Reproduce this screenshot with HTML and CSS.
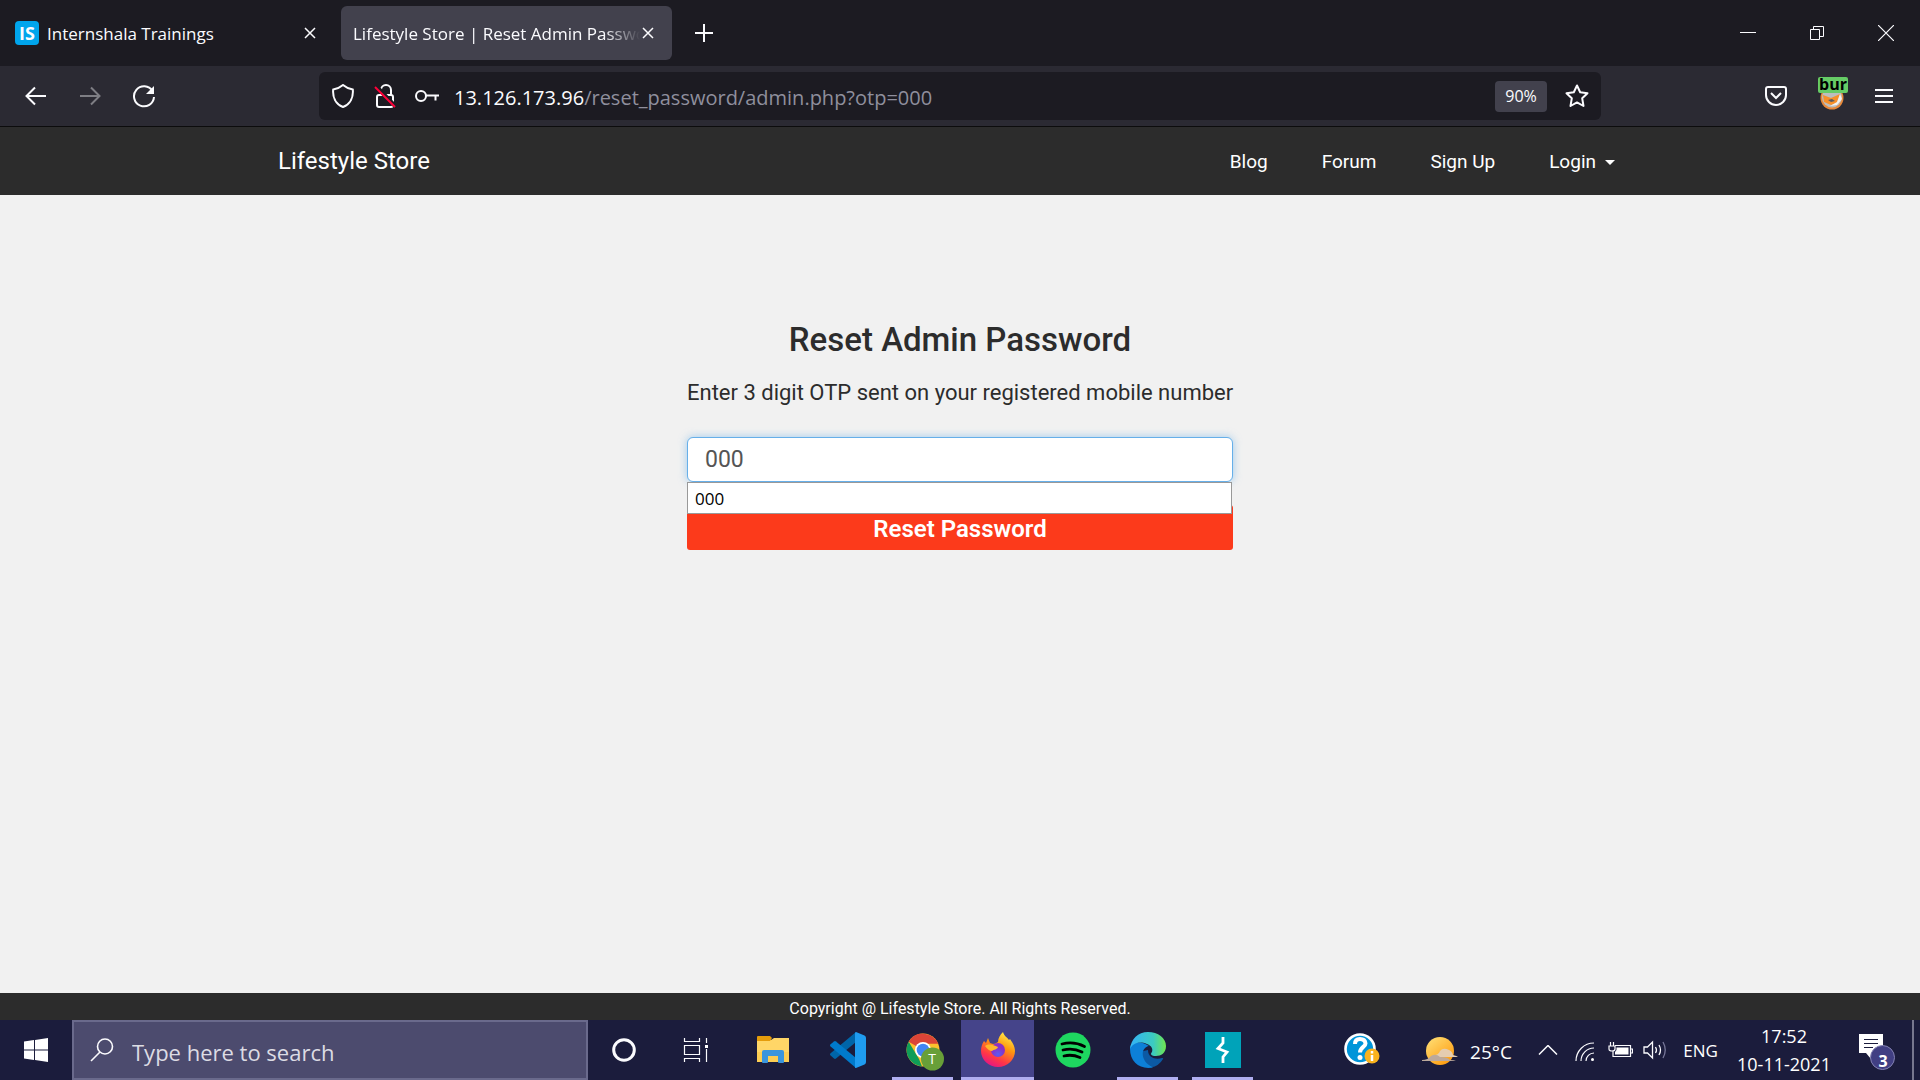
FILE: index.html
```html
<!DOCTYPE html>
<html lang="en">
<head>
<meta charset="utf-8">
<title>Lifestyle Store | Reset Admin Password</title>
<link rel="stylesheet" href="styles.css">
</head>
<body>
<header class="browser">
  <div class="tabstrip">
    <div class="tab">
      <span class="favicon">IS</span>
      <span class="tab-title">Internshala Trainings</span>
      <button class="tab-close" aria-label="Close tab"><svg width="12" height="12" viewBox="0 0 12 12"><path d="M1 1l10 10M11 1L1 11"/></svg></button>
    </div>
    <div class="tab active">
      <span class="tab-title fade">Lifestyle Store | Reset Admin Password</span>
      <button class="tab-close" aria-label="Close tab"><svg width="12" height="12" viewBox="0 0 12 12"><path d="M1 1l10 10M11 1L1 11"/></svg></button>
    </div>
    <button class="new-tab" aria-label="New tab"><svg width="20" height="20" viewBox="0 0 20 20"><path d="M10 1v18M1 10h18" stroke-width="2"/></svg></button>
    <div class="window-controls">
      <button aria-label="Minimize"><svg width="16" height="16" viewBox="0 0 16 16"><path d="M0 7.500h16" stroke-width="1"/></svg></button>
      <button aria-label="Restore"><svg width="16" height="16" viewBox="0 0 16 16"><path d="M1.500 4.500h9v10h-9zM4.500 4.500v-3h10v10h-4" stroke-width="1"/></svg></button>
      <button aria-label="Close"><svg width="16" height="16" viewBox="0 0 16 16"><path d="M0 0l16 16M16 0L0 16" stroke-width="1.200"/></svg></button>
    </div>
  </div>
  <div class="toolbar">
    <div class="nav-buttons">
      <button aria-label="Back"><svg width="22" height="20" viewBox="0 0 22 20"><path d="M21 10H1.500M10 1.500L1.500 10l8.500 8.500" stroke-width="2"/></svg></button>
      <button aria-label="Forward" class="dim"><svg width="22" height="20" viewBox="0 0 22 20"><path d="M1 10h19.500M12 1.500l8.500 8.500-8.500 8.500" stroke-width="2"/></svg></button>
      <button aria-label="Reload"><svg width="24" height="24" viewBox="0 0 24 24"><path d="M20.500 7A10 10 0 1 0 22 13" stroke-width="2"/><path d="M22 2v8h-8z" fill="#fbfbfe" stroke="none"/></svg></button>
    </div>
    <div class="urlbar">
      <button aria-label="Tracking protection" class="url-icon"><svg width="22" height="24" viewBox="0 0 22 24"><path d="M11 1C8 3.500 4.500 5 1.200 5.500 0.500 13 3.500 20 11 23c7.500-3 10.500-10 9.800-17.500C17.500 5 14 3.500 11 1z" stroke-width="2"/></svg></button>
      <button aria-label="Connection not secure" class="url-icon"><svg width="22" height="26" viewBox="0 0 22 26"><path d="M7 7a5 5 0 0 1 10 0v5M5 12h12q2 0 2 2v8q0 2-2 2H5q-2 0-2-2v-8q0-2 2-2z" stroke-width="2"/><path d="M2 3l20 21" stroke="#1c1b22" stroke-width="4"/><path d="M1 4l20 20" stroke="#ff0039" stroke-width="2"/></svg></button>
      <button aria-label="Saved logins" class="url-icon"><svg width="24" height="14" viewBox="0 0 24 14"><circle cx="6" cy="7" r="5" stroke-width="2"/><path d="M11 6.500h13M20.500 6.500v5" stroke-width="2"/></svg></button>
      <span class="url"><b>13.126.173.96</b>/reset_password/admin.php?otp=000</span>
      <button class="zoom">90%</button>
      <button aria-label="Bookmark" class="star"><svg width="24" height="24" viewBox="0 0 24 24"><path d="M12 1.500l3.200 6.700 7.300 1-5.300 5.100 1.300 7.700-6.500-3.600L5.500 22l1.300-7.700L1.500 9.200l7.300-1z" stroke-width="2" stroke-linejoin="round"/></svg></button>
    </div>
    <div class="extensions">
      <button aria-label="Pocket"><svg width="22" height="20" viewBox="0 0 22 20"><path d="M3 1h16q2 0 2 2v6a10 10 0 0 1-20 0V3q0-2 2-2z" stroke-width="2"/><path d="M6 7l5 5 5-5" stroke-width="2"/></svg></button>
      <button aria-label="Proxy switcher" class="foxy"><svg width="24" height="24" viewBox="0 0 24 24" stroke="none"><circle cx="12" cy="12" r="11.500" fill="#e8893a"/><circle cx="12" cy="11.500" r="10" fill="#bdbdbd"/><path d="M3 9l8 3 9-4-3 9-6 2-7-3z" fill="#f7902a"/><path d="M20 8l2 5-5 6-7 1 7-4z" fill="#f4f1ee"/><path d="M8 14l4-1 3 2-4 1z" fill="#5a5a62"/></svg><span class="foxy-badge">bur</span></button>
      <button aria-label="Menu"><svg width="18" height="16" viewBox="0 0 18 16"><path d="M0 2h18M0 8h18M0 14h18" stroke-width="2"/></svg></button>
    </div>
  </div>
</header>

<nav class="site-nav">
  <div class="container">
    <a class="brand" href="#">Lifestyle Store</a>
    <a href="#">Blog</a>
    <a href="#">Forum</a>
    <a href="#">Sign Up</a>
    <a href="#">Login<span class="caret"></span></a>
  </div>
</nav>

<main class="page">
  <form class="reset">
    <h1>Reset Admin Password</h1>
    <label for="otp">Enter 3 digit OTP sent on your registered mobile number</label>
    <div class="field">
      <input id="otp" type="text" value="000" autocomplete="off">
      <div class="suggestions">000</div>
    </div>
    <button type="button" class="submit">Reset Password</button>
  </form>
</main>

<footer class="site-footer">Copyright @ Lifestyle Store. All Rights Reserved.</footer>

<div class="taskbar">
  <button class="start" aria-label="Start"><svg width="24" height="24" viewBox="0 0 24 24"><path fill="#fff" stroke="none" d="M0 3.500l10-1.400V11.500H0zM11 2L24 0v11.500H11zM0 12.500h10v9.400L0 20.500zM11 12.500h13V24l-13-2z"/></svg></button>
  <div class="search">
    <svg width="24" height="24" viewBox="0 0 24 24"><circle cx="15" cy="8.500" r="7.500" stroke-width="1.600"/><path d="M10 14L1 23" stroke-width="1.600"/></svg>
    <input type="text" placeholder="Type here to search" aria-label="Type here to search">
  </div>
  <button class="task" aria-label="Cortana"><svg width="24" height="24" viewBox="0 0 24 24"><circle cx="12" cy="12" r="10.300" stroke-width="3"/></svg></button>
  <button class="task" aria-label="Task View"><svg width="26" height="24" viewBox="0 0 26 24"><path d="M1.500 0v3.500h15V0M1.500 24v-3.500h15V24M1.500 7.500h15v9h-15zM23.500 0v5M23.500 11v13" stroke-width="1.200"/><path d="M22 7h3v3h-3z" fill="#fff" stroke="none"/></svg></button>
  <div class="apps">
    <button class="app" aria-label="File Explorer"><svg width="32" height="28" viewBox="0 0 32 28" stroke="none"><path fill="#ffd667" d="M0 4h14l3-2h15v24H0z"/><path fill="#f9c440" d="M0 16h32v10H0z" opacity=".5"/><path fill="#e59c0b" d="M0 1q0-1 1-1h12l2 2-2 3H0z"/><path fill="#3a95dd" d="M5 26V16q0-2 2-2h18q2 0 2 2v10q0 1-1 1h-4q-1 0-1-1v-6H11v6q0 1-1 1H6q-1 0-1-1z"/></svg></button>
    <button class="app" aria-label="Visual Studio Code"><svg width="36" height="36" viewBox="0 0 36 36" stroke="none"><path fill="#0065a9" d="M26 0v10L6 26.500q-1 .8-2 0L.600 23.500q-1.200-1 0-2.200z"/><path fill="#007acc" d="M.600 14.500q-1.200-1.200 0-2.200L4 9.500q1-.8 2 0L26 26v10z"/><path fill="#1f9cf0" d="M26 0l8.500 3.500Q36 4.200 36 6v24q0 1.800-1.500 2.500L26 36q-1.500 0-1-1.500V1.500Q25 .2 26 0z"/></svg></button>
    <button class="app open" aria-label="Google Chrome"><svg width="38" height="38" viewBox="-2 -1 38 38" overflow="visible" stroke="none"><circle cx="17" cy="18" r="16.500" fill="#fbc02d"/><path fill="#db4437" d="M17 18L2.700 9.800a16.500 16.500 0 0 1 29.500 2H17z"/><path fill="#0f9d58" d="M2.700 9.800L13 27l3 7.400A16.500 16.500 0 0 1 2.700 9.800z"/><circle cx="17" cy="18" r="8" fill="#fff"/><circle cx="17" cy="18" r="6.300" fill="#4285f4"/><circle cx="26.500" cy="27" r="11.500" fill="#689f38"/></svg><span class="profile">T</span></button>
    <button class="app open current" aria-label="Firefox"><svg width="36" height="36" viewBox="0 0 36 36" stroke="none"><defs><linearGradient id="ff" x1=".8" y1="0" x2=".3" y2="1"><stop offset="0" stop-color="#fff44f"/><stop offset=".4" stop-color="#ff980e"/><stop offset=".75" stop-color="#ff3647"/><stop offset="1" stop-color="#e31587"/></linearGradient><radialGradient id="globe" cx=".5" cy=".8"><stop offset="0" stop-color="#5b5bf0"/><stop offset="1" stop-color="#8b2fc4"/></radialGradient></defs><path fill="url(#ff)" d="M4 9l2 2 2-5 2 5 3 1c2 0 3-1 5-2 0-4 2-7 5-10 1 4 4 5 6 8l1-1c2 3 5 7 5 12A17 16 0 0 1 1 19c0-4 1-7 3-10z"/><circle cx="18" cy="18" r="7" fill="url(#globe)"/><path fill="#ffb72a" d="M5 14c4-3 8-1 13 1-1 3-4 2-6 4-2 0-5-2-7-5z"/></svg></button>
    <button class="app" aria-label="Spotify"><svg width="36" height="36" viewBox="0 0 36 36"><circle cx="18" cy="18" r="17.500" fill="#1ed760" stroke="none"/><path d="M7 12q12-3 22.500 2.500M8 18q10-2.500 19 2M9 24q8-2 16 1.500" stroke="#000" stroke-width="2.800" stroke-linecap="round"/></svg></button>
    <button class="app open" aria-label="Microsoft Edge"><svg width="36" height="36" viewBox="0 0 36 36" stroke="none"><defs><linearGradient id="ed"><stop offset=".1" stop-color="#35b6f0"/><stop offset=".65" stop-color="#3ccbc0"/><stop offset="1" stop-color="#70e64e"/></linearGradient></defs><path fill="#0c59a4" d="M9 20c0 9 5 15 12 15.500q8-1.500 12-8.500 1-1-1-1c-6 2-14 0-14-8z"/><path fill="#0d80d8" d="M0 17C0 8 12 9 19 14c-8 1-10 15 4 21.500C10 38 0 30 0 17z"/><path fill="url(#ed)" d="M0 17C1 7 8 0 18 0c10 0 18 6 18 14 0 7-5 10-10 10-5 0-6-2-4-4 1-3 0-6-5-8C9 9 3 11 0 17z"/></svg></button>
    <button class="app open" aria-label="Burp Suite"><svg width="36" height="36" viewBox="0 0 36 36" stroke="none"><path fill="#00a3b9" d="M0 0h36v36H0z"/><path d="M18 5v6l-5 5.500 9 3.500-4 5v6" stroke="#fff" stroke-width="2.800"/></svg></button>
  </div>
  <div class="tray">
    <button class="help" aria-label="Help"><svg width="36" height="34" viewBox="0 0 36 34"><circle cx="16" cy="16" r="14.500" fill="#0095d9" stroke="#fff" stroke-width="2.600"/><path d="M11 11q0-5 5-5t5.500 4.500C21.500 14 16 14 16 19.500" stroke="#fff" stroke-width="4"/><circle cx="16" cy="24.500" r="2.500" fill="#fff" stroke="none"/><circle cx="28" cy="23" r="7.500" fill="#f9b21d" stroke="none"/><path d="M28 22v6M28 18v2.500" stroke="#fff" stroke-width="2.500"/></svg></button>
    <button class="weather"><svg width="36" height="30" viewBox="0 0 36 30" stroke="none"><defs><linearGradient id="sun" x2=".8" y2="1"><stop offset="0" stop-color="#ffe27a"/><stop offset="1" stop-color="#ff9a0c"/></linearGradient></defs><circle cx="18" cy="14" r="14" fill="url(#sun)"/><path fill="#e5cdb0" d="M10 19q7-1 8-5 3-4 9-1 3 1 4 5 4 1 5 2H17z"/><path fill="#bca99b" d="M0 23q6 0 9-4 5-3 9 1 8 0 10 3 4 0 6 1H0z"/></svg>25°C</button>
    <button class="chevron" aria-label="Show hidden icons"><svg width="20" height="10" viewBox="0 0 20 10"><path d="M1 9.500l9-9 9 9" stroke-width="1.500"/></svg></button>
    <button class="wifi" aria-label="Network"><svg width="20" height="20" viewBox="0 0 20 20"><path d="M1 19A18 18 0 0 1 19 1M6 19A13 13 0 0 1 19 6M11 19a8 8 0 0 1 8-8" stroke-width="1.200"/><circle cx="17.500" cy="17.500" r="1.500" fill="#fff" stroke="none"/></svg></button>
    <button class="battery" aria-label="Battery"><svg width="25" height="18" viewBox="0 0 25 18"><path d="M7 4.500h15.500v11H5v-5M23 8h1.500v4H23M1 5h6v3q0 2-3 2t-3-2zM2.500 1v4M5.500 1v4" stroke-width="1.200"/><path d="M8.500 6.500h12v7H7V11l1.500-2z" fill="#fff" stroke="none"/></svg></button>
    <button class="volume" aria-label="Volume"><svg width="24" height="20" viewBox="0 0 24 20"><path d="M1 7h3.500L9.500 2v16l-5-5H1zM12.500 7q2 3 0 6M16 5q3 5 0 10" stroke-width="1.300"/><path d="M20 2q4.500 8 0 16" stroke="#777799" stroke-width="1.300"/></svg></button>
    <button class="lang">ENG</button>
    <button class="clock"><span>17:52</span><span>10-11-2021</span></button>
    <button class="notify" aria-label="Notifications"><svg width="36" height="36" viewBox="0 0 36 36"><path fill="#fff" stroke="none" d="M0 0h24v19H12v6l-5-6H0z"/><path d="M5 5.500h14M5 9.500h14M5 13.500h9" stroke="#1b1c3c" stroke-width="1.200"/><circle cx="23.500" cy="23.500" r="12" fill="#413f83" stroke="#8583b4" stroke-width="1"/></svg><span class="count">3</span></button>
    <span class="show-desktop"></span>
  </div>
</div>
</body>
</html>
```
FILE: styles.css
```css
* { box-sizing: border-box; }

body {
  margin: 0;
  min-height: 100vh;
  display: flex;
  flex-direction: column;
  background: #f1f1f1;
  font-family: "Open Sans", "Noto Sans", sans-serif;
}

button {
  display: flex;
  align-items: center;
  justify-content: center;
  padding: 0;
  border: 0;
  background: none;
  color: inherit;
  font: inherit;
}

input { font: inherit; }

svg { display: block; flex: none; fill: none; stroke: #fbfbfe; stroke-width: 1.5; }
svg[stroke="none"] { stroke: none; }

/* Browser window */
.browser { color: #fbfbfe; }

.tabstrip {
  display: flex;
  align-items: center;
  height: 66px;
  background: #1c1b22;
  font-size: 17px;
}

.tab {
  display: flex;
  align-items: center;
  width: 331px;
  height: 54px;
  padding: 0 13px 0 15px;
  border-radius: 6px;
}

.tab + .tab { margin-left: 10px; }
.tab.active { padding: 0 16px 0 12px; background: #42414d; }

.favicon {
  width: 24px;
  height: 24px;
  margin-right: 8px;
  border-radius: 4px;
  background: #00a5ec;
  font: 700 18px/24px "Open Sans", sans-serif;
  text-align: center;
}

.tab-title { flex: 1; overflow: hidden; white-space: nowrap; }
.fade { mask-image: linear-gradient(to left, transparent, #000 36px); }
.tab-close { width: 16px; height: 24px; }
.new-tab { width: 64px; height: 54px; }

.window-controls { display: flex; margin-left: auto; }
.window-controls button { width: 69px; height: 66px; }

.toolbar {
  display: flex;
  align-items: center;
  height: 61px;
  background: #2b2a33;
  border-bottom: 1px solid #0c0c0d;
}

.nav-buttons { display: flex; width: 319px; padding-left: 9px; }
.nav-buttons button { width: 54px; height: 48px; }
.dim { opacity: .4; }

.urlbar {
  flex: 1;
  display: flex;
  align-items: center;
  height: 48px;
  padding: 0 10px 0 3px;
  border-radius: 6px;
  background: #1c1b22;
}

.url-icon { width: 42px; height: 48px; }
.url { flex: 1; padding: 2px 0 0 6px; color: #8f8f9d; font-size: 20px; }
.url b { color: #fbfbfe; font-weight: 400; }

.zoom {
  width: 52px;
  height: 31px;
  margin-right: 16px;
  border-radius: 4px;
  background: #42414d;
  font-size: 16px;
}

.star { width: 28px; height: 48px; }

.extensions { display: flex; align-items: center; justify-content: flex-end; width: 319px; padding-right: 9px; }
.extensions button { position: relative; width: 54px; height: 48px; }

.foxy-badge {
  position: absolute;
  left: 15px;
  top: 5px;
  width: 30px;
  height: 16px;
  border-radius: 2px;
  background: #66cc66;
  color: #000;
  font: 700 16px/15px "Open Sans", sans-serif;
  text-align: center;
}

.extensions .foxy { padding: 4px 0 0 3px; }

/* Store page */
.site-nav,
.page,
.site-footer { font-family: Roboto, sans-serif; }

.site-nav { background: #2c2c2c; }

.container {
  display: flex;
  align-items: center;
  max-width: 1364px;
  height: 68px;
  margin: 0 auto;
}

.container a {
  padding: 0 27px;
  color: #fff;
  font-size: 19px;
  text-decoration: none;
}

.container .brand { margin-right: auto; padding: 0; font-size: 24px; }

.caret {
  display: inline-block;
  margin-left: 9px;
  border: 5px solid transparent;
  border-top-color: #fff;
  border-bottom: 0;
  vertical-align: middle;
}

.page { flex: 1; padding: 121px 20px 0; color: #2c2c2c; }

.reset {
  display: flex;
  flex-direction: column;
  max-width: 546px;
  margin: 0 auto;
}

h1 { margin: 0; font-size: 33px; line-height: 48px; font-weight: 500; text-align: center; }
.reset label { margin: 17px 0 32px; font-size: 22px; line-height: 24px; text-align: center; white-space: nowrap; }

.field { position: relative; margin-bottom: 23px; }

.field input {
  display: block;
  width: 100%;
  height: 45px;
  padding: 0 17px;
  border: 1px solid #66afe9;
  border-radius: 6px;
  outline: 0;
  background: #fff;
  box-shadow: 0 0 9px rgba(102, 175, 233, .6);
  color: #555;
  font-size: 23px;
}

.suggestions {
  position: absolute;
  z-index: 1;
  top: 100%;
  left: 0;
  right: 1px;
  height: 32px;
  padding-left: 7px;
  border: 1px solid #999;
  background: #fff;
  color: #000;
  font: 17px/32px "Open Sans", sans-serif;
}

.submit {
  height: 45px;
  padding-top: 3px;
  border-radius: 3px;
  background: #fc3a1b;
  color: #fff;
  font-size: 24px;
  font-weight: 600;
}

.site-footer {
  height: 27px;
  background: #2c2c2c;
  color: #fff;
  font-size: 16px;
  line-height: 32px;
  text-align: center;
}

/* Desktop taskbar */
.taskbar {
  display: flex;
  height: 60px;
  background: #1b1c3c;
  color: #fff;
}

.taskbar button { position: relative; }
.start, .task { width: 72px; }

.search {
  display: flex;
  align-items: center;
  width: 516px;
  padding-left: 16px;
  border: 2px solid #6a6a8c;
  background: #4c4b6e;
}

.search input {
  flex: 1;
  padding: 4px 0 0 18px;
  border: 0;
  outline: 0;
  background: none;
  font-size: 22px;
}

.search input::placeholder { color: #dcdce4; opacity: 1; }

.apps { display: flex; gap: 2px; margin-left: 4px; }
.app { width: 73px; }
.app.open::after { content: ""; position: absolute; left: 6px; right: 6px; bottom: 0; height: 3px; background: #b0aef0; }
.app.current { background: #45448a; }
.app.current::after { left: 0; right: 0; }

.profile {
  position: absolute;
  left: 38px;
  top: 29px;
  width: 16px;
  font: 14px/20px "Open Sans", sans-serif;
  text-align: center;
}

.tray { display: flex; margin-left: auto; font-size: 17px; }
.help { width: 50px; }
.weather { gap: 12px; width: 112px; margin-left: 24px; padding-top: 3px; font-size: 19px; }
.chevron { width: 50px; }
.wifi { width: 24px; padding-top: 4px; }
.battery { width: 46px; }
.volume { width: 24px; }
.lang { width: 67px; }
.clock { flex-direction: column; width: 100px; font-size: 18px; line-height: 28px; }
.notify { width: 54px; margin-left: 16px; padding-top: 4px; }
.count { position: absolute; left: 26px; top: 30px; width: 14px; font: 700 16px/22px "Open Sans", sans-serif; }
.show-desktop { width: 8px; margin-left: 8px; border-left: 2px solid #77778f; }
```
